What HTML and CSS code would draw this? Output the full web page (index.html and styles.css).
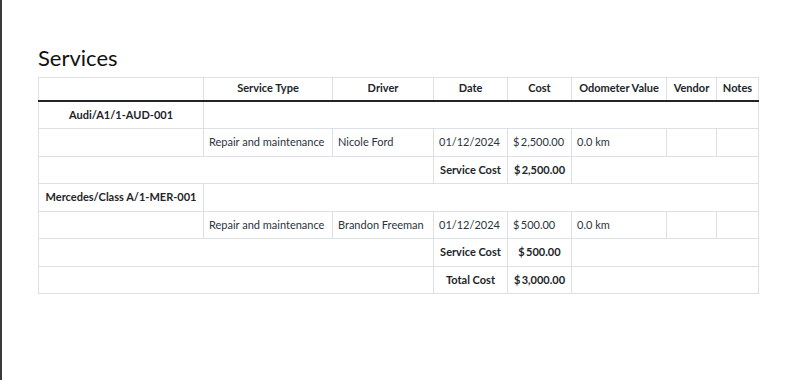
FILE: index.html
```html
<!DOCTYPE html>
<html>
    <head>
        <title>Services</title>
        <link rel="stylesheet" href="styles.css">
    </head>
    <body>
        <div class="page">
            <h2 class="title">Services</h2>
            <table class="report">
                <colgroup>
                    <col class="c-vehicle">
                    <col class="c-type">
                    <col class="c-driver">
                    <col class="c-date">
                    <col class="c-cost">
                    <col class="c-odo">
                    <col class="c-vendor">
                    <col class="c-notes">
                </colgroup>
                <thead>
                    <tr>
                        <th></th>
                        <th>Service Type</th>
                        <th>Driver</th>
                        <th>Date</th>
                        <th>Cost</th>
                        <th>Odometer Value</th>
                        <th>Vendor</th>
                        <th>Notes</th>
                    </tr>
                </thead>
                <tbody>
                    <tr>
                        <td class="vehicle">Audi/A1/1-AUD-001</td>
                        <td colspan="7"></td>
                    </tr>
                    <tr>
                        <td></td>
                        <td>Repair and maintenance</td>
                        <td>Nicole Ford</td>
                        <td>01/12/2024</td>
                        <td>$&#8201;2,500.00</td>
                        <td>0.0 km</td>
                        <td></td>
                        <td></td>
                    </tr>
                    <tr>
                        <td colspan="3"></td>
                        <td class="sum">Service Cost</td>
                        <td class="sum">$&#8201;2,500.00</td>
                        <td colspan="3"></td>
                    </tr>
                    <tr>
                        <td class="vehicle">Mercedes/Class A/1-MER-001</td>
                        <td colspan="7"></td>
                    </tr>
                    <tr>
                        <td></td>
                        <td>Repair and maintenance</td>
                        <td>Brandon Freeman</td>
                        <td>01/12/2024</td>
                        <td>$&#8201;500.00</td>
                        <td>0.0 km</td>
                        <td></td>
                        <td></td>
                    </tr>
                    <tr>
                        <td colspan="3"></td>
                        <td class="sum">Service Cost</td>
                        <td class="sum">$&#8201;500.00</td>
                        <td colspan="3"></td>
                    </tr>
                    <tr>
                        <td colspan="3"></td>
                        <td class="sum">Total Cost</td>
                        <td class="sum">$&#8201;3,000.00</td>
                        <td colspan="3"></td>
                    </tr>
                </tbody>
            </table>
        </div>
    </body>
</html>
```

FILE: styles.css
```css
body
{
    margin: 0;
    height: 380px;
    border-left: 2px solid #3a3a3a;
    background: #fff;
    font-family: Lato, "Liberation Sans", sans-serif;
    color: #2b3340;
}

.page
{
    padding: 45px 0 0 36px;
}

.title
{
    margin: 0 0 6px 0;
    font-size: 22px;
    font-weight: normal;
    line-height: 1.2;
    color: #111;
}

.report
{
    width: 720px;
    table-layout: fixed;
    border-collapse: collapse;
    font-size: 11px;
    line-height: 1.5;
}

.c-vehicle { width: 165px; }
.c-type { width: 129px; }
.c-driver { width: 101px; }
.c-date { width: 74px; }
.c-cost { width: 64px; }
.c-odo { width: 95px; }
.c-vendor { width: 50px; }
.c-notes { width: 42px; }

.report th,
.report td
{
    border: 1px solid #dde1e6;
    white-space: nowrap;
    overflow: hidden;
}

.report th
{
    padding: 2px 5px 3px 5px;
    border-bottom: 2px solid #212529;
    font-weight: bold;
    text-align: center;
    color: #212529;
}

.report td
{
    height: 16px;
    padding: 5px 5px;
    text-align: left;
}

.report td.vehicle,
.report td.sum
{
    font-weight: bold;
    text-align: center;
    color: #212529;
}
```
